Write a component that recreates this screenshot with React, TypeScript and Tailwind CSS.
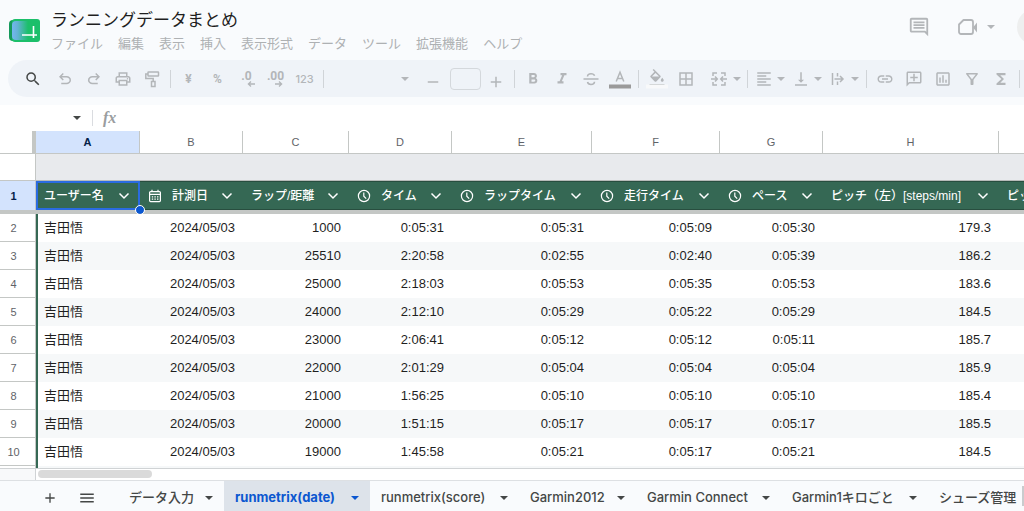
import type { ReactNode } from "react"
import {
  MdSearch,
  MdOutlinePrint,
  MdFormatBold,
  MdFormatItalic,
  MdFormatAlignLeft,
  MdVerticalAlignBottom,
  MdBorderAll,
  MdLink,
  MdOutlineAddComment,
  MdOutlineInsertChart,
  MdOutlineFilterAlt,
  MdFunctions,
  MdOutlineComment,
  MdFormatColorFill,
  MdAdd,
  MdRemove,
  MdMenu,
} from "react-icons/md"

const menus = ["ファイル", "編集", "表示", "挿入", "表示形式", "データ", "ツール", "拡張機能", "ヘルプ"]

interface Column {
  letter: string
  title: string
  width: string
  icon?: "calendar" | "clock"
}

const columns: Column[] = [
  { letter: "A", title: "ユーザー名", width: "w-[104px]" },
  { letter: "B", title: "計測日", width: "w-[103px]", icon: "calendar" },
  { letter: "C", title: "ラップ/距離", width: "w-[106px]" },
  { letter: "D", title: "タイム", width: "w-[103px]", icon: "clock" },
  { letter: "E", title: "ラップタイム", width: "w-[140px]", icon: "clock" },
  { letter: "F", title: "走行タイム", width: "w-[128px]", icon: "clock" },
  { letter: "G", title: "ペース", width: "w-[103px]", icon: "clock" },
  { letter: "H", title: "ピッチ（左）[steps/min]", width: "w-[176px]" },
  { letter: "", title: "ピッチ（右）[steps/min]", width: "w-[176px]" },
]

const rows = [
  ["吉田悟", "2024/05/03", "1000", "0:05:31", "0:05:31", "0:05:09", "0:05:30", "179.3", ""],
  ["吉田悟", "2024/05/03", "25510", "2:20:58", "0:02:55", "0:02:40", "0:05:39", "186.2", ""],
  ["吉田悟", "2024/05/03", "25000", "2:18:03", "0:05:53", "0:05:35", "0:05:53", "183.6", ""],
  ["吉田悟", "2024/05/03", "24000", "2:12:10", "0:05:29", "0:05:22", "0:05:29", "184.5", ""],
  ["吉田悟", "2024/05/03", "23000", "2:06:41", "0:05:12", "0:05:12", "0:05:11", "185.7", ""],
  ["吉田悟", "2024/05/03", "22000", "2:01:29", "0:05:04", "0:05:04", "0:05:04", "185.9", ""],
  ["吉田悟", "2024/05/03", "21000", "1:56:25", "0:05:10", "0:05:10", "0:05:10", "185.4", ""],
  ["吉田悟", "2024/05/03", "20000", "1:51:15", "0:05:17", "0:05:17", "0:05:17", "185.5", ""],
  ["吉田悟", "2024/05/03", "19000", "1:45:58", "0:05:21", "0:05:17", "0:05:21", "184.5", ""],
]

const tabs = [
  { name: "データ入力", width: "w-[106px]" },
  { name: "runmetrix(date)", width: "w-[146px]", active: true },
  { name: "runmetrix(score)", width: "w-[149px]" },
  { name: "Garmin2012", width: "w-[117px]" },
  { name: "Garmin Connect", width: "w-[145px]" },
  { name: "Garmin1キロごと", width: "w-[147px]" },
  { name: "シューズ管理", width: "w-[120px]" },
]

function Caret() {
  return (
    <svg viewBox="0 0 8 4" className="w-2 h-1 shrink-0" fill="currentColor">
      <path d="M0 0h8L4 4z" />
    </svg>
  )
}

function Chevron() {
  return (
    <svg viewBox="0 0 12 8" className="w-3 h-2 shrink-0" fill="none" stroke="currentColor" strokeWidth="1.5">
      <path d="M1.5 1.5 6 6l4.5-4.5" />
    </svg>
  )
}

function ClockIcon() {
  return (
    <svg viewBox="0 0 14 14" className="w-3.5 h-3.5 shrink-0" fill="none" stroke="currentColor" strokeWidth="1.2">
      <circle cx="7" cy="7" r="5.6" />
      <path d="M6.8 3.4v3.8l2.4 2.4" />
    </svg>
  )
}

function CalendarIcon() {
  return (
    <svg viewBox="0 0 14 14" className="w-3.5 h-3.5 shrink-0" fill="none" stroke="currentColor" strokeWidth="1.2">
      <rect x="1.6" y="2.6" width="10.8" height="10" rx="1" />
      <path d="M4 .8v2M10 .8v2M2 5.4h10" />
      <path d="M3.8 7.8h6.6M3.8 10.2h6.6" strokeDasharray="1.4 1.2" />
    </svg>
  )
}

function SheetsLogo() {
  return (
    <svg viewBox="0 0 32 24" className="w-8 h-6">
      <defs>
        <linearGradient id="fade" x1="0" x2="1">
          <stop offset="0" stopColor="#74b6f0" />
          <stop offset="0.35" stopColor="#63b3d4" />
          <stop offset="1" stopColor="#1cbf6a" />
        </linearGradient>
      </defs>
      <rect x="0" y="1" width="12" height="21" rx="4" fill="#159a5b" />
      <rect x="3" y="0" width="28" height="23" rx="3" fill="#1cbf6a" />
      <path d="M7 2h12v19H7a4 4 0 0 1-4-4V6a4 4 0 0 1 4-4z" fill="url(#fade)" />
      <path d="M13 16h15M24.500 7v12" stroke="#fff" strokeWidth="1.6" fill="none" />
    </svg>
  )
}

function Symbol({ d }: { d: string }) {
  return (
    <svg viewBox="0 -960 960 960" className="w-[18px] h-[18px]" fill="currentColor">
      <path d={d} />
    </svg>
  )
}

// 18px line icons that the icon set doesn't have
function LineIcon({ children }: { children: ReactNode }) {
  return (
    <svg viewBox="0 0 18 18" className="w-[18px] h-[18px]" fill="none" stroke="currentColor" strokeWidth="1.5">
      {children}
    </svg>
  )
}

function ToolButton({ label, children }: { label: string; children: ReactNode }) {
  return (
    <button aria-label={label} className="w-[29px] h-7 shrink-0 flex items-center justify-center text-[18px]">
      {children}
    </button>
  )
}

function DropButton({ label, children }: { label: string; children: ReactNode }) {
  return (
    <button aria-label={label} className="w-[37px] h-7 pl-1 shrink-0 flex items-center gap-1 text-[18px]">
      {children}
      <Caret />
    </button>
  )
}

function Divider() {
  return <div className="w-px h-[18px] ml-1 mr-[3px] shrink-0 bg-[#d0d4d8]" />
}

function Toolbar() {
  return (
    <div className="ml-2 mt-1.5 h-[37px] pl-2 rounded-l-full bg-[#eff3f8] text-[#b3b6b9] flex items-center overflow-hidden">
      <button aria-label="検索" className="w-[34px] h-7 shrink-0 flex items-center justify-center text-[18px] text-[#444746]">
        <MdSearch />
      </button>
      <ToolButton label="元に戻す">
        <Symbol d="M280-200v-80h284q63 0 109.500-40T720-420q0-60-46.500-100T564-560H312l104 104-56 56-200-200 200-200 56 56-104 104h252q97 0 169.500 63T800-420q0 94-72.500 157T564-200H280Z" />
      </ToolButton>
      <ToolButton label="やり直し">
        <Symbol d="M396-200q-97 0-169.500-63T154-420q0-94 72.500-157T396-640h252L544-744l56-56 200 200-200 200-56-56 104-104H396q-63 0-109.500 40T240-420q0 60 46.500 100T396-280h284v80H396Z" />
      </ToolButton>
      <ToolButton label="印刷">
        <MdOutlinePrint />
      </ToolButton>
      <ToolButton label="書式をコピー">
        <LineIcon>
          <rect x="5" y="2" width="10.500" height="4" rx="0.5" />
          <path d="M5 4H2.800v4.600h7.400v3" />
          <rect x="8.500" y="11.500" width="3.500" height="5" />
        </LineIcon>
      </ToolButton>
      <Divider />
      <ToolButton label="通貨">
        <span className="font-['Roboto'] text-xs font-bold">¥</span>
      </ToolButton>
      <ToolButton label="パーセント">
        <span className="font-['Roboto'] text-xs font-bold">%</span>
      </ToolButton>
      <ToolButton label="小数点以下の桁数を減らす">
        <span className="flex flex-col font-['Roboto'] text-xs leading-[10px] font-bold">
          .0
          <svg viewBox="0 0 8 6" className="w-2 h-1.5 ml-2" fill="none" stroke="currentColor" strokeWidth="1.3">
            <path d="M8 3H1.500M4 .6 1.400 3 4 5.400" />
          </svg>
        </span>
      </ToolButton>
      <ToolButton label="小数点以下の桁数を増やす">
        <span className="flex flex-col font-['Roboto'] text-xs leading-[10px] font-bold">
          .00
          <svg viewBox="0 0 8 6" className="w-2 h-1.5 ml-2" fill="none" stroke="currentColor" strokeWidth="1.3">
            <path d="M0 3h6.500M4 .6 6.600 3 4 5.400" />
          </svg>
        </span>
      </ToolButton>
      <ToolButton label="表示形式の詳細">
        <span className="text-[11px] leading-4 font-medium">123</span>
      </ToolButton>
      <Divider />
      <button aria-label="フォント" className="w-[91px] h-7 pr-[9px] shrink-0 flex items-center justify-end">
        <Caret />
      </button>
      <ToolButton label="フォントサイズを縮小">
        <MdRemove className="w-[18px] h-[18px] mt-1.5" />
      </ToolButton>
      <input aria-label="フォントサイズ" className="w-[31px] h-[22px] ml-[3px] shrink-0 rounded border border-[#d4d8dc]" />
      <ToolButton label="フォントサイズを拡大">
        <MdAdd className="w-[18px] h-[18px] mt-1.5" />
      </ToolButton>
      <Divider />
      <ToolButton label="太字">
        <MdFormatBold />
      </ToolButton>
      <ToolButton label="斜体">
        <MdFormatItalic />
      </ToolButton>
      <ToolButton label="取り消し線">
        <LineIcon>
          <path d="M1.500 9h15M5.500 6.500C5.500 4.500 7 3.700 9 3.700s3.200.8 3.600 2M5.500 12c.3 1.600 1.600 2.400 3.500 2.400s3.500-.8 3.500-2.600" />
        </LineIcon>
      </ToolButton>
      <ToolButton label="テキストの色">
        <svg viewBox="0 0 22 20" className="w-[22px] h-5" fill="none" stroke="currentColor" strokeWidth="1.5">
          <path d="M7.200 12.500 11 3.200l3.800 9.300M8.500 9.500h5" />
          <path d="M0 17.500h22" stroke="#9a9a9a" strokeWidth="4" />
        </svg>
      </ToolButton>
      <Divider />
      <ToolButton label="塗りつぶしの色">
        <svg viewBox="0 0 22 20" className="w-[22px] h-5" fill="currentColor">
          <MdFormatColorFill x="2" y="0" width="17" height="17" />
          <path d="M0 15.500h22v4H0z" fill="#f8f9fa" />
        </svg>
      </ToolButton>
      <ToolButton label="枠線">
        <MdBorderAll />
      </ToolButton>
      <button aria-label="セルを結合" className="w-[43px] h-7 pl-[11px] shrink-0 flex items-center gap-1.5">
        <svg viewBox="0 0 16 16" className="w-4 h-4" fill="none" stroke="currentColor" strokeWidth="1.5">
          <path d="M6 2H2v3M10 2h4v3M6 14H2v-3M10 14h4v-3M0 8h5.500M16 8h-5.500M4 5.500 6.300 8 4 10.500M12 5.500 9.700 8l2.300 2.500" />
        </svg>
        <Caret />
      </button>
      <Divider />
      <DropButton label="水平方向の配置">
        <MdFormatAlignLeft />
      </DropButton>
      <DropButton label="垂直方向の配置">
        <MdVerticalAlignBottom />
      </DropButton>
      <DropButton label="テキストを折り返す">
        <LineIcon>
          <path d="M3.500 3v12M8.500 3v3.500M8.500 11.500V15M5.500 9h8M11 6l3 3-3 3" />
        </LineIcon>
      </DropButton>
      <Divider />
      <ToolButton label="リンクを挿入">
        <MdLink />
      </ToolButton>
      <ToolButton label="コメントを挿入">
        <MdOutlineAddComment className="-scale-x-100" />
      </ToolButton>
      <ToolButton label="グラフを挿入">
        <MdOutlineInsertChart />
      </ToolButton>
      <ToolButton label="フィルタを作成">
        <MdOutlineFilterAlt />
      </ToolButton>
      <ToolButton label="関数">
        <MdFunctions />
      </ToolButton>
      <Divider />
    </div>
  )
}

function Header() {
  return (
    <header className="shrink-0 pb-2">
      <div className="flex items-start">
        <a href="#" aria-label="スプレッドシート ホーム" className="ml-[9px] mt-[19px] shrink-0">
          <SheetsLogo />
        </a>
        <div className="flex-1 min-w-0 ml-[10px] pt-2">
          <h1 className="text-[17px] leading-6 text-[#1f1f1f] whitespace-nowrap">ランニングデータまとめ</h1>
          <nav className="flex gap-[15px] text-[13px] leading-[22px] text-[#aeb1b3] whitespace-nowrap">
            {menus.map((menu) => (
              <button key={menu}>{menu}</button>
            ))}
          </nav>
        </div>
        <div className="flex items-center h-[54px] text-[#b3b6b9] overflow-hidden">
          <button aria-label="コメント" className="mr-[28px]">
            <MdOutlineComment className="w-[22px] h-[22px]" />
          </button>
          <button aria-label="ビデオ通話" className="mr-[22px] flex items-center gap-[9px]">
            <svg viewBox="0 0 20 18" className="w-5 h-[18px]" fill="none" stroke="currentColor" strokeWidth="1.800">
              <path d="M5.500 2H13a2 2 0 0 1 2 2v10a2 2 0 0 1-2 2H3a2 2 0 0 1-2-2V6.500z" strokeLinejoin="round" />
              <path d="M15 9.500 19 4.500v10z" fill="currentColor" stroke="none" />
            </svg>
            <Caret />
          </button>
          <button aria-label="共有" className="w-9 h-9 -mr-[29px] rounded-full bg-[#eeefef]" />
        </div>
      </div>
      <Toolbar />
    </header>
  )
}

function FormulaBar() {
  return (
    <div className="h-[26px] shrink-0 bg-white flex items-center">
      <input aria-label="名前ボックス" className="w-[68px] h-5 pl-2 text-xs outline-none" />
      <button aria-label="名前ボックスを開く" className="w-6 h-5 pl-[5px] flex items-center text-[#444746]">
        <Caret />
      </button>
      <div className="w-px h-4 bg-[#dadce0]" />
      <label htmlFor="formula" className="w-7 pl-2.5 font-['Liberation_Serif'] italic font-bold text-base leading-5 text-[#9a9d9f]">
        fx
      </label>
      <input id="formula" className="flex-1 h-5 px-2 text-xs outline-none" />
    </div>
  )
}

function Grid() {
  return (
    <div className="flex-1 min-h-0 overflow-hidden bg-white">
      <table className="table-fixed w-[1175px] border-separate border-spacing-0 text-[13px] leading-5 text-[#1f1f1f]">
        <colgroup>
          <col className="w-9" />
          {columns.map((c, i) => (
            <col key={i} className={c.width} />
          ))}
        </colgroup>
        <thead>
          <tr className="text-[11px] text-[#5f6368]">
            <td className="h-[23px] p-0 border-b border-r-4 border-[#c4c7c5]" />
            {columns.map((c, i) => (
              <th
                key={i}
                className={`h-[23px] p-0 border-b border-r border-[#c4c7c5] ${
                  i === 0 ? "bg-[#d3e3fd] font-bold text-[#041e49]" : "font-normal"
                }`}
              >
                {c.letter}
              </th>
            ))}
          </tr>
          <tr>
            <td className="h-[27px] p-0 border-b border-r border-[#c4c7c5]" />
            <td colSpan={9} className="h-[27px] p-0 border-b border-[#b8bcba] bg-[#e8eaed]" />
          </tr>
          <tr>
            <th className="h-[29px] p-0 pr-2 border-r border-[#c4c7c5] bg-[#d3e3fd] text-[11px] text-[#041e49]">1</th>
            {columns.map((c, i) => (
              <th
                key={i}
                className={`relative h-[29px] p-0 bg-[#356854] text-white text-left font-medium whitespace-nowrap ${
                  i === 0 ? "border-2 border-[#2a6be0]" : "border-y border-[#284e3f]"
                }`}
              >
                <div className={`flex items-center ${i === 0 ? "pl-1.5 pr-2" : "pl-2 pr-2.5"}`}>
                  {c.icon === "clock" && <ClockIcon />}
                  {c.icon === "calendar" && <CalendarIcon />}
                  <span className={`flex-1 text-xs leading-5 ${c.icon ? "pl-2.5" : ""}`}>{c.title}</span>
                  <Chevron />
                </div>
                {i === 0 && (
                  <span className="absolute z-10 -right-1.5 -bottom-1.5 w-2 h-2 rounded-full bg-[#0b57d0] outline outline-white" />
                )}
              </th>
            ))}
          </tr>
          <tr>
            <td colSpan={10} className="h-1 p-0 bg-[#c4c7c5]" />
          </tr>
        </thead>
        <tbody>
          {rows.map((row, r) => (
            <tr key={r} className={r % 2 === 1 ? "bg-[#f6f8f9]" : "bg-white"}>
              <th className="h-7 p-0 pr-2 border-b border-r border-[#c4c7c5] bg-white text-[11px] font-normal text-[#5f6368]">
                {r + 2}
              </th>
              {row.map((cell, i) => (
                <td key={i} className={`h-7 p-0 ${i === 0 ? "pl-1.5 border-l-2 border-[#356854]" : "pr-2 text-right"}`}>
                  {cell}
                </td>
              ))}
            </tr>
          ))}
          <tr className="bg-[#f6f8f9]">
            <th className="h-7 p-0 border-r border-[#c4c7c5] bg-white" />
            <td colSpan={9} className="h-7 p-0 border-l-2 border-[#356854]" />
          </tr>
        </tbody>
      </table>
    </div>
  )
}

function SheetTabs() {
  return (
    <footer className="h-[31px] shrink-0 border-t border-[#dde0e3] flex items-stretch">
      <button aria-label="シートを追加" className="ml-8 w-9 pt-1 shrink-0 flex items-center justify-center text-[#444746]">
        <MdAdd className="w-4 h-4" />
      </button>
      <button aria-label="すべてのシート" className="mr-[13px] w-[37px] pt-1 shrink-0 flex items-center justify-center text-[#444746]">
        <MdMenu className="w-[18px] h-[18px]" />
      </button>
      <div className="flex-1 min-w-0 flex overflow-hidden">
        {tabs.map((tab) => (
          <button
            key={tab.name}
            className={`${tab.width} shrink-0 pt-1 pl-[11px] pr-[11px] flex items-center justify-between text-[13px] whitespace-nowrap ${
              tab.active ? "bg-[#dde3ea] font-bold text-[#0b57d0]" : "font-medium text-[#444746]"
            }`}
          >
            {tab.name}
            <Caret />
          </button>
        ))}
      </div>
      <div className="w-0.5 h-5 self-center shrink-0 bg-[#c9ccce]" />
    </footer>
  )
}

export default function App() {
  return (
    <div className="h-screen flex flex-col overflow-hidden bg-[#f9fbfd] font-['Inter','Noto_Sans_CJK_JP',sans-serif]">
      <Header />
      <FormulaBar />
      <main className="flex-1 min-h-0 flex flex-col font-['Liberation_Sans','Noto_Sans_CJK_JP',sans-serif]">
        <Grid />
        <div className="h-3 shrink-0 flex bg-white border-t border-[#d0d3d5]">
          <div className="w-9 border-r border-[#d0d3d5] bg-[#f8f9fa]" />
          <div className="w-[114px] h-2 ml-0.5 mt-px rounded-full bg-[#dadada]" />
        </div>
      </main>
      <SheetTabs />
    </div>
  )
}
